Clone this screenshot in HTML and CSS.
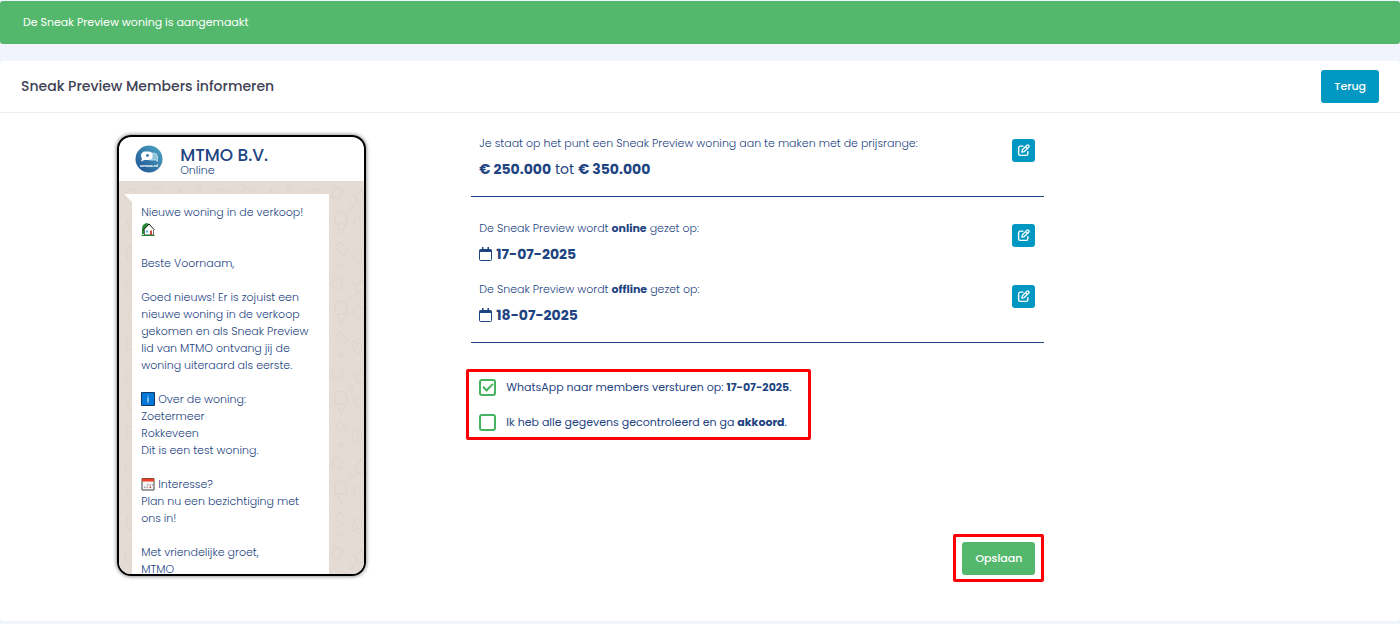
FILE: index.html
```html
<!DOCTYPE html>
<html lang="nl">
<head>
    <meta charset="utf-8">
    <meta name="viewport" content="width=device-width, initial-scale=1.0">
    <title>Sneak Preview Members informeren</title>
    <link rel="stylesheet" href="styles.css">
</head>
<body>
    <!-- Icons that are used more than once -->
    <svg class="sprite" aria-hidden="true">
        <symbol id="icon-edit" viewBox="0 0 24 24">
            <path d="M11 4H6a3 3 0 0 0-3 3v11a3 3 0 0 0 3 3h11a3 3 0 0 0 3-3v-4" fill="none" stroke="currentColor" stroke-width="2.6" stroke-linecap="round"/>
            <path d="M9 15l1-4.500 8-8a2.200 2.200 0 0 1 3.500 3.500l-8 8zM16 5l3.500 3.500" fill="none" stroke="currentColor" stroke-width="2.400" stroke-linejoin="round"/>
        </symbol>
        <symbol id="icon-calendar" viewBox="0 0 13 14">
            <path d="M1.500 2.500h10a1 1 0 0 1 1 1v9a1 1 0 0 1-1 1h-10a1 1 0 0 1-1-1v-9a1 1 0 0 1 1-1z" fill="none" stroke="currentColor"/>
            <path d="M0.500 2.500h12v2.500h-12zM3 0h1.500v3H3zM8.500 0H10v3H8.500z" fill="currentColor"/>
        </symbol>
    </svg>

    <div class="alert" role="status">De Sneak Preview woning is aangemaakt</div>

    <main class="card">
        <header class="card-header">
            <h1>Sneak Preview Members informeren</h1>
            <a href="#" class="btn btn-info">Terug</a>
        </header>

        <div class="card-body">
            <!-- WhatsApp preview -->
            <section class="phone">
                <div class="phone-header">
                    <svg class="avatar" viewBox="0 0 28 28" aria-hidden="true">
                        <defs>
                            <linearGradient id="avatar-bg" x1="0" y1="1" x2="1" y2="0">
                                <stop offset="0" stop-color="#1c4f91"/>
                                <stop offset="1" stop-color="#4fa9c4"/>
                            </linearGradient>
                        </defs>
                        <circle cx="14" cy="14" r="13.500" fill="url(#avatar-bg)"/>
                        <path d="M15 8h3.500a4 4 0 0 1 4 4v4.500l-2-1.500h-6" fill="#8fc4db" stroke="#d5eaf3" stroke-width="0.700"/>
                        <path d="M9.500 6.500h4.500a4.300 4.300 0 0 1 0 8.500H9.500L6 16.500l1-3a4.300 4.300 0 0 1 2.500-7z" fill="#fff"/>
                        <circle cx="12.500" cy="10.500" r="1.400" fill="#3978a8"/>
                        <text x="14" y="22" text-anchor="middle">MTMO.nl</text>
                    </svg>
                    <div>
                        <h2>MTMO B.V.</h2>
                        <p>Online</p>
                    </div>
                </div>
                <div class="chat">
                    <div class="bubble">
                        <p>Nieuwe woning in de verkoop!<br>
                            <svg class="emoji" viewBox="0 0 14 14" role="img" aria-label="huis">
                                <path d="M1 12V6l1-3 3-2 4 1 1 3v7z" fill="#258a35"/>
                                <path d="M3.500 7L8 2.500 12.500 7v6h-9z" fill="#fff"/>
                                <path d="M2 8.500L8 2l5.500 6" fill="none" stroke="#222"/>
                                <path d="M3.500 8v5h9V8" fill="none" stroke="#444" stroke-width="0.700"/>
                                <path d="M5 8.500h2v2H5z" fill="#4fb8e8"/>
                                <path d="M9 8.500h2V13H9z" fill="#cc4b3d"/>
                                <path d="M0.500 13.300h13" stroke="#238034" stroke-width="1.300"/>
                            </svg>
                        </p>
                        <p>Beste Voornaam,</p>
                        <p>Goed nieuws! Er is zojuist een nieuwe woning in de verkoop gekomen en als Sneak Preview lid van MTMO ontvang jij de woning uiteraard als eerste.</p>
                        <p>
                            <svg class="emoji" viewBox="0 0 14 14" role="img" aria-label="info">
                                <path d="M0.500 0.500h13v13H.5z" fill="#0078d7" stroke="#123a66"/>
                                <path d="M6.500 3.500h1v1h-1zM6.500 5.500h1V10.500h-1z" fill="#fff"/>
                            </svg>
                            Over de woning:<br>
                            Zoetermeer<br>
                            Rokkeveen<br>
                            Dit is een test woning.
                        </p>
                        <p>
                            <svg class="emoji" viewBox="0 0 14 14" role="img" aria-label="kalender">
                                <path d="M1 1.500h12v11.500H1z" fill="#f3f3f3" stroke="#444"/>
                                <path d="M1 1.500h12v3H1z" fill="#e8412a"/>
                                <path d="M6 7h1.500v1.500H6zM8.500 7H10v1.500H8.500zM11 7h1v1.500h-1zM3 9.500h1.500V11H3zM5.500 9.500H7V11H5.500z" fill="#aaa"/>
                                <path d="M8.500 9.500H10V11H8.500z" fill="#e8412a"/>
                            </svg>
                            Interesse?<br>
                            Plan nu een bezichtiging met ons in!
                        </p>
                        <p>Met vriendelijke groet,<br>MTMO</p>
                    </div>
                </div>
            </section>

            <!-- Settings of the sneak preview -->
            <form class="details">
                <section class="group">
                    <div class="item">
                        <div>
                            <p>Je staat op het punt een Sneak Preview woning aan te maken met de prijsrange:</p>
                            <p class="value"><b>€ 250.000</b> tot <b>€ 350.000</b></p>
                        </div>
                        <button type="button" class="btn-edit" aria-label="Prijsrange wijzigen"><svg><use href="#icon-edit"/></svg></button>
                    </div>
                </section>

                <section class="group">
                    <div class="item">
                        <div>
                            <p>De Sneak Preview wordt <b>online</b> gezet op:</p>
                            <p class="value"><svg><use href="#icon-calendar"/></svg><b>17-07-2025</b></p>
                        </div>
                        <button type="button" class="btn-edit" aria-label="Online datum wijzigen"><svg><use href="#icon-edit"/></svg></button>
                    </div>
                    <div class="item">
                        <div>
                            <p>De Sneak Preview wordt <b>offline</b> gezet op:</p>
                            <p class="value"><svg><use href="#icon-calendar"/></svg><b>18-07-2025</b></p>
                        </div>
                        <button type="button" class="btn-edit" aria-label="Offline datum wijzigen"><svg><use href="#icon-edit"/></svg></button>
                    </div>
                </section>

                <div class="marked checks">
                    <div class="check">
                        <input type="checkbox" id="whatsapp" checked>
                        <label for="whatsapp">WhatsApp naar members versturen op: <b>17-07-2025</b>.</label>
                    </div>
                    <div class="check">
                        <input type="checkbox" id="akkoord">
                        <label for="akkoord">Ik heb alle gegevens gecontroleerd en ga <b>akkoord</b>.</label>
                    </div>
                </div>

                <div class="marked save">
                    <button type="submit" class="btn btn-success">Opslaan</button>
                </div>
            </form>
        </div>
    </main>
</body>
</html>
```
FILE: styles.css
```css
* {
    box-sizing: border-box;
}

body {
    margin: 0;
    padding: 1px 0 3px;
    background-color: #f1f4fd;
    color: #1e4482;
    font-family: Poppins, Inter, "Open Sans", sans-serif;
    font-size: 11px;
    font-weight: 300;
    line-height: 17px;
}

h1, h2, p {
    margin: 0;
}

b {
    font-weight: 700;
}

.sprite {
    display: none;
}

/* Green message on top */
.alert {
    padding: 13px 23px;
    border-radius: 3px;
    background-color: #54b86c;
    color: #fff;
    font-weight: 400;
}

/* Card */
.card {
    margin-top: 17px;
    border-radius: 4px;
    background-color: #fff;
}

.card-header {
    display: flex;
    align-items: center;
    justify-content: space-between;
    padding: 9px 21px;
    border-bottom: 1px solid #ededf0;
}

.card-header h1 {
    color: #3f4254;
    font-size: 14px;
    font-weight: 500;
}

.card-body {
    display: grid;
    grid-template-columns: 32.5% 42.2% 1fr;
    column-gap: 9px;
    padding: 22px 21px 39px;
}

.btn {
    padding: 8px 13px;
    border: 0;
    border-radius: 3px;
    color: #fff;
    font: inherit;
    font-weight: 500;
    text-decoration: none;
}

.btn-info {
    background-color: #0098c3;
}

.btn-success {
    background-color: #54b86c;
}

/* Phone */
.phone {
    display: flex;
    flex-direction: column;
    justify-self: center;
    width: 249px;
    height: 441px;
    overflow: hidden;
    border: 2px solid #000;
    border-radius: 14px;
    box-shadow: 0 0 4px rgba(0, 0, 0, 0.6);
}

.phone-header {
    display: flex;
    gap: 17px;
    flex: none;
    height: 44px;
    padding: 8px 16px;
}

.phone-header h2 {
    font-size: 17px;
    font-weight: 500;
    line-height: 20px;
}

.phone-header p {
    line-height: 10px;
}

.avatar {
    width: 28px;
    height: 28px;
}

.avatar text {
    fill: #fff;
    font-size: 4px;
    font-weight: 700;
}

.chat {
    flex: 1;
    min-height: 0;
    padding: 13px 35px 0 13px;
    background-color: #e4dcd4;
    background-image: url("data:image/svg+xml,%3Csvg xmlns='http://www.w3.org/2000/svg' width='90' height='90' fill='none' stroke='%23dcd3ca'%3E%3Ccircle cx='14' cy='16' r='8'/%3E%3Cpath d='M10 14h2m4 0h2m-7 5q3 2 6 0M36 6l8 3-3 9-9-3zM62 8l2 5 5 1-4 4 1 5-5-2-4 2 1-5-3-4 5-1zM78 22h9v12h-9zM8 40l12-4 3 10-12 4zM36 34q6-8 12 0v9H36zm2 9l4 10 5-10M64 38q7-6 9 1t-9 11q-10-5-9-11t9-1M8 66h15v12H8zm3 4h9m-9 4h6M36 66l5-5 8 8-5 5zM76 50l4 4-4 4-4-4zM80 70v12m-5-8h10'/%3E%3Ccircle cx='60' cy='75' r='7'/%3E%3Ccircle cx='60' cy='75' r='3'/%3E%3Ccircle cx='28' cy='28' r='1'/%3E%3Ccircle cx='52' cy='26' r='2'/%3E%3Ccircle cx='28' cy='58' r='2'/%3E%3Ccircle cx='80' cy='8' r='2'/%3E%3Ccircle cx='42' cy='84' r='2'/%3E%3C/svg%3E");
}

.bubble {
    position: relative;
    display: flex;
    flex-direction: column;
    gap: 17px;
    min-height: 100%;
    padding: 10px 9px;
    background-color: #fff;
}

/* Tail of the message */
.bubble::before {
    content: "";
    position: absolute;
    top: 0;
    left: -8px;
    border-top: 8px solid #fff;
    border-left: 8px solid transparent;
}

.emoji {
    width: 14px;
    height: 14px;
    vertical-align: -3px;
}

/* Details */
.details {
    display: flex;
    flex-direction: column;
}

.group {
    display: flex;
    flex-direction: column;
    gap: 18px;
    margin-bottom: 23px;
    padding: 0 9px 18px 8px;
    border-bottom: 1px solid #1e4482;
}

.item {
    display: flex;
    align-items: flex-start;
    justify-content: space-between;
}

.value {
    display: flex;
    align-items: center;
    gap: 4px;
    margin-top: 8px;
    font-size: 14px;
    font-weight: 400;
    line-height: 18px;
}

.value svg {
    width: 13px;
    height: 14px;
}

.btn-edit {
    display: flex;
    align-items: center;
    justify-content: center;
    width: 23px;
    height: 23px;
    margin-top: 4px;
    padding: 0;
    border: 0;
    border-radius: 3px;
    background-color: #0098c3;
    color: #fff;
}

.btn-edit svg {
    width: 13px;
    height: 13px;
}

/* Red frame around the parts that need attention */
.marked {
    border: 3px solid #fb0007;
    border-radius: 2px;
}

.checks {
    display: flex;
    flex-direction: column;
    align-self: flex-start;
    gap: 18px;
    margin: 3px 0 0 -5px;
    padding: 7px 16px 6px 10px;
    font-weight: 400;
}

.check {
    display: flex;
    align-items: center;
    gap: 10px;
}

.check input {
    display: grid;
    place-items: center;
    width: 17px;
    height: 17px;
    margin: 0;
    appearance: none;
    border: 2px solid #45b35f;
    border-radius: 3px;
}

.check input:checked::before {
    content: "";
    width: 8px;
    height: 4px;
    margin-bottom: 3px;
    border: solid #45b35f;
    border-width: 0 0 2px 2px;
    transform: rotate(-45deg);
}

.save {
    align-self: flex-end;
    margin-top: 94px;
    padding: 5px 6px 4px;
}

.save .btn {
    display: block;
}
```
